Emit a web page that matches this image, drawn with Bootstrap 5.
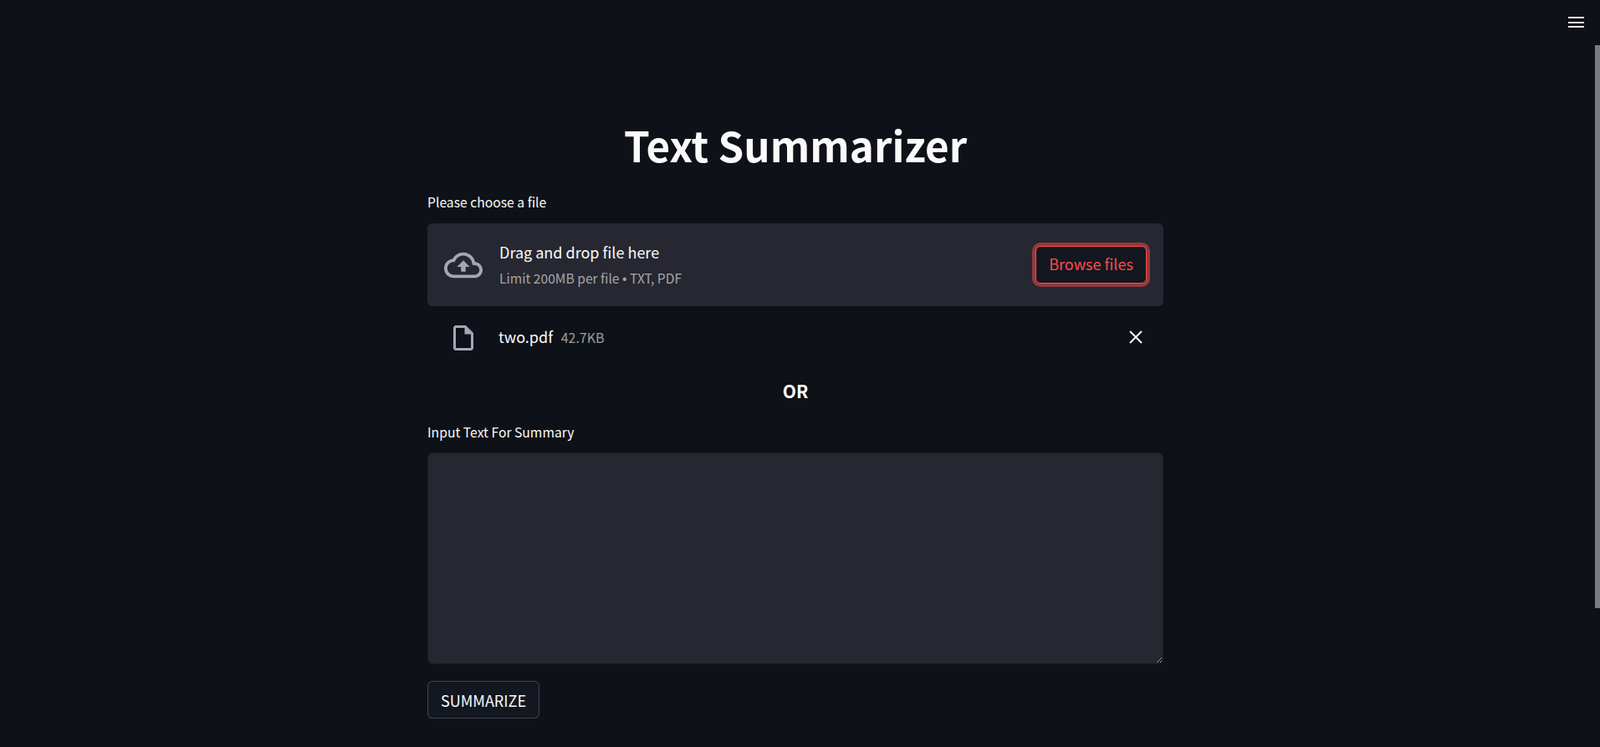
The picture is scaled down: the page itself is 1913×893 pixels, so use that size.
<!DOCTYPE html>
<html lang="en">
<head>
<meta charset="UTF-8">
<title>Text Summarizer</title>
<link href="https://cdn.jsdelivr.net/npm/bootstrap@5.3.3/dist/css/bootstrap.min.css" rel="stylesheet">
<style>
    html, body { height: 100%; overflow: hidden; }
    body {
        background-color: #0e1117;
        color: #fafafa;
        font-family: "Noto Sans CJK SC", "Noto Sans", sans-serif;
        padding-right: 11px;
    }
    .app-main { width: 880px; padding-top: 139px; }
    .app-title { font-size: 49.3px; font-weight: 700; line-height: 68px; margin: 0 0 23px; }
    .field-label { font-size: 15.7px; line-height: 24px; margin: 0 0 13px; display: block; }
    .drop-zone { height: 99px; background: #262730; border-radius: 6px; padding: 0 15px 0 20px; }
    .drop-title { font-size: 18px; line-height: 26px; }
    .drop-limit { font-size: 15.6px; line-height: 24px; color: rgba(250,250,250,.6); margin-top: 6px; }
    .dot-sep { font-family: "Liberation Sans", sans-serif; }
    .cloud-icon { width: 46px; height: 46px; margin-right: 20px; fill: #a3a8b8; }
    .btn.browse-btn {
        width: 133px; height: 45px; margin-right: 5px;
        background: #131720; color: #ff4b4b; border: 1px solid #ff4b4b;
        border-radius: 6px; font-size: 18px; line-height: 24px; padding: 0 0 3px;
        box-shadow: 0 0 0 4px rgba(255,75,75,.5);
    }
    .file-row { height: 76px; padding-left: 25px; padding-right: 25px; }
    .file-icon { width: 36px; height: 36px; margin-right: 24px; fill: #a3a8b8; }
    .file-text { margin-bottom: 3px; }
    .file-name { font-size: 18px; line-height: 26px; }
    .file-size { font-size: 16px; line-height: 26px; color: rgba(250,250,250,.6); margin-left: 6px; }
    .close-icon { width: 16px; height: 16px; stroke: #fafafa; stroke-width: 2; margin-bottom: 3px; }
    .or-label { font-size: 21px; font-weight: 700; line-height: 32px; margin: 9px 0 22px; }
    .form-control.summary-input {
        height: 253px; margin-top: 12px; background: #262730; color: #fafafa;
        border: 1px solid #1b1c24; border-radius: 6px;
    }
    .btn.summarize-btn {
        width: 134px; height: 45px; margin-top: 20px; padding: 0;
        background: #131720; color: #fafafa;
        border: 1px solid rgba(250,250,250,.2); border-radius: 6px;
        font-size: 18px; line-height: 24px;
    }
    .menu-icon { position: absolute; top: 20px; left: 1875px; width: 19px; height: 14px; }
    .menu-icon span { display: block; height: 2px; background: #e8e8e8; margin-bottom: 3.5px; }
    .scroll-thumb { position: absolute; top: 54px; right: 0; width: 6px; height: 673px; background: #7b7b7d; }
</style>
</head>
<body>
    <div class="menu-icon"><span></span><span></span><span></span></div>
    <div class="scroll-thumb"></div>

    <main class="app-main mx-auto">
        <h1 class="app-title text-center">Text Summarizer</h1>

        <label class="field-label">Please choose a file</label>
        <div class="drop-zone d-flex align-items-center">
            <svg class="cloud-icon flex-shrink-0" viewBox="0 0 24 24"><path d="M19.35 10.04C18.67 6.59 15.64 4 12 4 9.11 4 6.6 5.64 5.35 8.04 2.34 8.36 0 10.91 0 14c0 3.31 2.69 6 6 6h13c2.76 0 5-2.24 5-5 0-2.64-2.05-4.78-4.65-4.96zM19 18H6c-2.21 0-4-1.79-4-4 0-2.05 1.53-3.76 3.56-3.97l1.07-.11.5-.95C8.08 7.14 9.94 6 12 6c2.62 0 4.88 1.86 5.39 4.43l.3 1.5 1.53.11c1.56.1 2.78 1.41 2.78 2.96 0 1.65-1.35 3-3 3zM8 13h2.55v3h2.9v-3H16l-4-4z"/></svg>
            <div class="flex-grow-1">
                <div class="drop-title">Drag and drop file here</div>
                <div class="drop-limit">Limit 200MB per file <span class="dot-sep">•</span> TXT, PDF</div>
            </div>
            <button type="button" class="btn browse-btn">Browse files</button>
        </div>

        <div class="file-row d-flex align-items-center">
            <svg class="file-icon flex-shrink-0" viewBox="0 0 24 24"><path d="M14 2H6c-1.1 0-1.99.9-1.99 2L4 20c0 1.1.89 2 1.99 2H18c1.1 0 2-.9 2-2V8l-6-6zM6 20V4h7v5h5v11H6z"/></svg>
            <div class="file-text flex-grow-1">
                <span class="file-name">two.pdf</span>
                <span class="file-size">42.7KB</span>
            </div>
            <svg class="close-icon" viewBox="0 0 16 16"><path d="M1 1l14 14M15 1L1 15"/></svg>
        </div>

        <p class="or-label text-center">OR</p>

        <label class="field-label mb-0">Input Text For Summary</label>
        <textarea class="form-control summary-input"></textarea>

        <button type="button" class="btn summarize-btn">SUMMARIZE</button>
    </main>
</body>
</html>
